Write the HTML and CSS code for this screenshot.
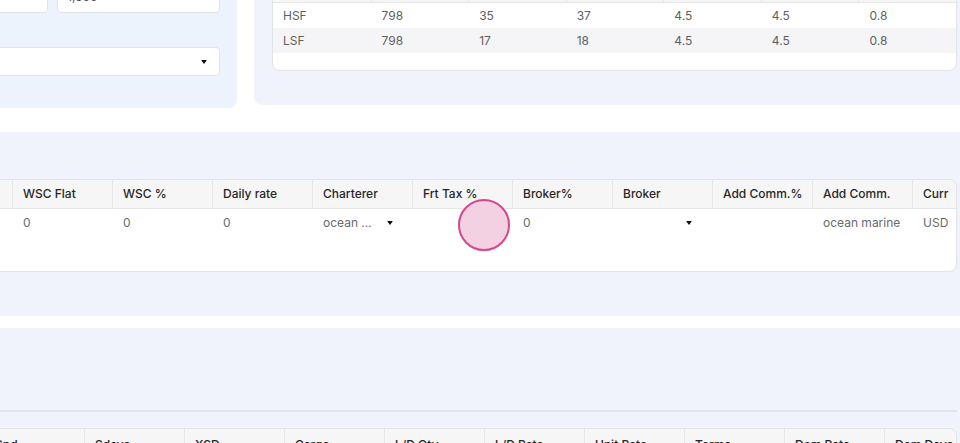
FILE: index.html
```html
<!DOCTYPE html>
<html lang="en">
<head>
<meta charset="utf-8">
<title>Voyage Estimate</title>
<link rel="stylesheet" href="styles.css">
</head>
<body>
<div class="page">
  <section class="top-row">
    <div class="panel panel-form">
      <div class="input-row">
        <div class="input"></div>
        <div class="input">1,500</div>
      </div>
      <div class="select"><span class="caret"></span></div>
    </div>
    <div class="panel panel-fuel">
      <div class="card">
        <div class="fuel-grid head">
          <div class="th"></div><div class="th"></div><div class="th"></div><div class="th"></div><div class="th"></div><div class="th"></div><div class="th"></div>
        </div>
        <div class="fuel-grid row">
          <div class="td">HSF</div><div class="td">798</div><div class="td">35</div><div class="td">37</div><div class="td">4.5</div><div class="td">4.5</div><div class="td">0.8</div>
        </div>
        <div class="fuel-grid row alt">
          <div class="td">LSF</div><div class="td">798</div><div class="td">17</div><div class="td">18</div><div class="td">4.5</div><div class="td">4.5</div><div class="td">0.8</div>
        </div>
      </div>
    </div>
  </section>

  <section class="band band-terms">
    <div class="card wide-card">
      <div class="terms-grid head">
        <div class="th"></div>
        <div class="th">WSC Flat</div>
        <div class="th">WSC %</div>
        <div class="th">Daily rate</div>
        <div class="th">Charterer</div>
        <div class="th">Frt Tax %</div>
        <div class="th">Broker%</div>
        <div class="th">Broker</div>
        <div class="th">Add Comm.%</div>
        <div class="th">Add Comm.</div>
        <div class="th">Curr</div>
      </div>
      <div class="terms-body">
        <div class="terms-grid row">
          <div class="td"></div>
          <div class="td">0</div>
          <div class="td">0</div>
          <div class="td">0</div>
          <div class="td drop"><span>ocean ...</span><span class="caret"></span></div>
          <div class="td"></div>
          <div class="td">0</div>
          <div class="td drop drop-broker"><span></span><span class="caret"></span></div>
          <div class="td"></div>
          <div class="td">ocean marine</div>
          <div class="td">USD</div>
        </div>
      </div>
    </div>
  </section>

  <section class="band band-itin">
    <div class="divider"></div>
    <div class="card wide-card">
      <div class="itin-grid head">
        <div class="th"></div>
        <div class="th">Spd</div>
        <div class="th">Sdays</div>
        <div class="th">XSD</div>
        <div class="th">Cargo</div>
        <div class="th">L/D Qty</div>
        <div class="th">L/D Rate</div>
        <div class="th">Unit Rate</div>
        <div class="th">Terms</div>
        <div class="th">Dem Rate</div>
        <div class="th">Dem Days</div>
      </div>
    </div>
  </section>
</div>
<div class="touch"></div>
</body>
</html>
```
FILE: styles.css
```css
html, body {
  margin: 0;
  padding: 0;
  overflow: hidden;
  background: #ffffff;
}

body {
  font-family: "Inter", "Liberation Sans", sans-serif;
  font-size: 12px;
  color: #5a5a5a;
}

.page {
  margin-top: -40px;
}

/* ---------- top row ---------- */
.top-row {
  display: flex;
  align-items: flex-start;
  gap: 17px;
  margin-left: -100px;
  margin-right: -15px;
}

.panel-form {
  width: 337px;
  box-sizing: border-box;
  background: #edf3fd;
  border-radius: 0 0 8px 8px;
  padding: 21px 17px 32px 17px;
}

.input-row {
  display: grid;
  grid-template-columns: 1fr 163px;
  gap: 9px;
}

.input {
  height: 32px;
  box-sizing: border-box;
  background: #fff;
  border: 1px solid #e2e3e6;
  border-radius: 4px;
  padding: 0 9px;
  line-height: 30px;
  font-size: 12px;
  color: #555;
}

.select {
  margin-top: 34px;
  height: 29px;
  box-sizing: border-box;
  background: #fff;
  border: 1px solid #e2e3e6;
  border-radius: 4px;
  display: flex;
  align-items: center;
  justify-content: flex-end;
  padding-right: 12px;
}

.caret {
  display: inline-block;
  width: 0;
  height: 0;
  border-left: 3.5px solid transparent;
  border-right: 3.5px solid transparent;
  border-top: 4.5px solid #111;
  border-radius: 1px;
}

.panel-fuel {
  flex: 1;
  background: #f0f3fc;
  border-radius: 0 0 8px 8px;
  padding: 12px 18px 34px 18px;
}

.card {
  background: #fff;
  border: 1px solid #e3e4e8;
  border-radius: 8px;
  overflow: hidden;
}

.panel-fuel .card {
  padding-bottom: 17px;
}

.fuel-grid {
  display: grid;
  grid-template-columns: repeat(7, 1fr);
}

.fuel-grid.head {
  height: 29px;
  background: #f6f6f6;
  border-bottom: 1px solid #e6e6e6;
}

.fuel-grid .th + .th {
  border-left: 1px solid #e6e6e6;
}

.fuel-grid .td {
  height: 25px;
  line-height: 25px;
  padding: 0 10px;
  color: #5f5f5f;
  white-space: nowrap;
}

.fuel-grid .td + .td {
  padding-left: 11px;
}

.fuel-grid.alt {
  background: #f5f5f8;
}

/* ---------- bands ---------- */
.band {
  background: #f0f3fc;
  margin-left: -120px;
  margin-right: -15px;
  padding-right: 18px;
}

.band-terms {
  margin-top: 24px;
  padding-top: 47px;
  padding-bottom: 44px;
}

.band-itin {
  margin-top: 12px;
  height: 200px;
}

.divider {
  height: 82px;
  border-bottom: 2px solid #e0e3eb;
  margin-bottom: 16px;
}

.wide-card .head {
  background: #f6f6f6;
  border-bottom: 1px solid #e6e6e6;
}

.wide-card .th {
  height: 28px;
  line-height: 28px;
  padding: 0 10px;
  font-weight: 500;
  color: #262626;
  white-space: nowrap;
  overflow: hidden;
}

.itin-grid .th {
  height: 30px;
  line-height: 31px;
}

.wide-card .th + .th {
  border-left: 1px solid #e6e6e6;
}

.terms-grid {
  display: grid;
  grid-template-columns: 131px repeat(10, 100px);
}

.itin-grid {
  display: grid;
  grid-template-columns: 103px repeat(10, 100px);
}

.terms-body {
  min-height: 62px;
}

.terms-grid .td {
  height: 27px;
  line-height: 27px;
  padding: 0 10px 0 11px;
  color: #6a6a6a;
  white-space: nowrap;
  overflow: hidden;
}

.terms-grid .td.drop {
  display: flex;
  align-items: center;
  justify-content: space-between;
  padding-right: 19px;
}

.terms-grid .td.drop-broker {
  padding-right: 20px;
}

/* touch indicator overlay */
.touch {
  position: absolute;
  left: 458px;
  top: 199px;
  width: 52px;
  height: 52px;
  box-sizing: border-box;
  border: 2px solid #d6468e;
  border-radius: 50%;
  background: #f3d0e2;
}
```
